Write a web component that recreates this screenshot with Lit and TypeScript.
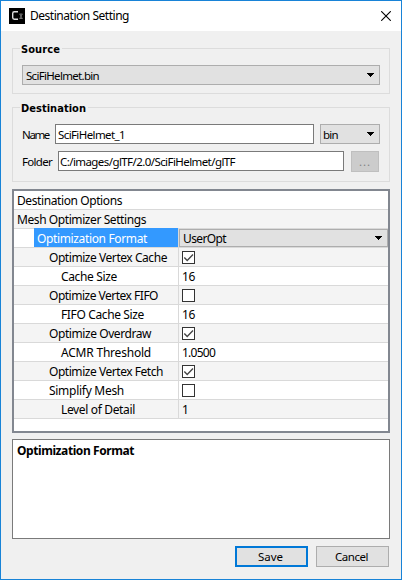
import { LitElement, html, css, svg, nothing } from "lit";
import { customElement, property } from "lit/decorators.js";

/** A label whose tracking is adjusted so that it takes up a given width. */
@customElement("fit-text")
class FitText extends LitElement {
  @property({ type: Number }) w = 0;
  @property() text = "";
  static styles = css`
    :host { display: inline-block; white-space: pre; }
  `;
  render() {
    return html`<span>${this.text}</span>`;
  }
  updated() {
    const span = this.renderRoot.querySelector("span") as HTMLElement;
    span.style.letterSpacing = "0px";
    const natural = span.getBoundingClientRect().width;
    span.style.letterSpacing = `${(this.w - natural) / this.text.length}px`;
  }
}

type Row = {
  label: string;
  w: number;
  level: number;
  value?: string;
  vw?: number;
  check?: boolean;
  select?: boolean;
};

const rows: Row[] = [
  { label: "Destination Options", w: 105, level: 0 },
  { label: "Mesh Optimizer Settings", w: 129, level: 0 },
  { label: "Optimization Format", w: 110, level: 1, value: "UserOpt", vw: 43, select: true },
  { label: "Optimize Vertex Cache", w: 118, level: 2, check: true },
  { label: "Cache Size", w: 56, level: 3, value: "16", vw: 13 },
  { label: "Optimize Vertex FIFO", w: 109, level: 2, check: false },
  { label: "FIFO Cache Size", w: 83, level: 3, value: "16", vw: 13 },
  { label: "Optimize Overdraw", w: 102, level: 2, check: true },
  { label: "ACMR Threshold", w: 90, level: 3, value: "1.0500", vw: 33 },
  { label: "Optimize Vertex Fetch", w: 114, level: 2, check: true },
  { label: "Simplify Mesh", w: 75, level: 2, check: false },
  { label: "Level of Detail", w: 74, level: 3, value: "1", vw: 6 },
];

const arrow = html`<svg class="arrow" width="7" height="4" viewBox="0 0 7 4" shape-rendering="crispEdges">
  <path d="M0 0h7v1h-1v1h-1v1h-1v1h-1v-1h-1v-1h-1v-1h-1z" />
</svg>`;

@customElement("app-root")
class AppRoot extends LitElement {
  static styles = css`
    :host { display: block; }
    * { box-sizing: border-box; }
    .window {
      width: 402px; height: 580px; border: 1px solid #1883d7; background: #f0f0f0; color: #000;
      font: 12px/16px "Noto Sans", "Open Sans", sans-serif; overflow: hidden;
      display: flex; flex-direction: column;
    }
    .tahoma { font-size: 11.5px; }
    .title { height: 30px; flex: none; background: #fff; display: flex; align-items: center; padding: 0 10px 0 8px; }
    .title svg { flex: none; display: block; }
    .title fit-text { margin: 0 auto 0 5px; }
    .body { display: flex; flex-direction: column; padding: 17px 11px 0; }
    .group { border: 1px solid #dcdcdc; padding: 0 9px; }
    .legend {
      display: flex; width: max-content; height: 16px; margin: -8px 0 0 -2px; padding: 0 2px 0 1px;
      background: #f0f0f0; font: bold 11px/17px "DejaVu Sans Condensed", "DejaVu Sans", sans-serif;
      font-stretch: condensed;
    }
    .source { height: 46px; }
    .source .combo { margin-top: 8px; }
    .destination { height: 75px; margin-top: 13px; }
    .line { display: flex; }
    .line.first { margin-top: 8px; }
    .line.second { margin-top: 7px; }
    .line > fit-text { line-height: 22px; height: 20px; flex: none; }
    .first > fit-text { width: 33px; }
    .second > fit-text { width: 36px; }
    .field {
      height: 20px; border: 1px solid #7a7a7a; background: #fff; line-height: 20px; padding-left: 2px; flex: none;
    }
    .name { width: 259px; margin-right: 6px; }
    .folder { width: 286px; margin-right: 7px; padding-left: 1px; }
    .combo {
      height: 20px; border: 1px solid #adadad; background: #e1e1e1; display: flex;
      justify-content: space-between; align-items: flex-start; padding: 0 5px 0 3px; line-height: 20px;
    }
    .combo .arrow { margin-top: 7px; flex: none; }
    .ext { width: 60px; padding-left: 2px; }
    .browse {
      width: 28px; height: 21px; border: 1px solid #bfbfbf; background: #ccc; color: #838383;
      text-align: center; line-height: 19px;
    }
    .table { height: 244px; border: 2px solid #828790; background: #fff; margin-top: 7px; }
    .row { display: flex; height: 19px; border-bottom: 1px solid #d9d9d9; line-height: 20px; }
    .row:nth-child(even) { background: #f4f4f4; }
    .cell { width: 165px; flex: none; border-right: 1px solid #d9d9d9; }
    .wide .cell { width: 100%; border: 0; }
    .l0 { padding-left: 3px; }
    .l1 { padding-left: 23px; }
    .l2 { padding-left: 35px; }
    .l3 { padding-left: 47px; }
    .active .cell { padding-left: 0; display: flex; }
    .mark { background: #3399ff; color: #fff; margin-left: 20px; padding-left: 3px; flex: 1; margin-top: -1px; height: 19px; line-height: 22px; }
    .value { flex: 1; padding-left: 3px; display: flex; min-width: 0; }
    .active .value { padding: 0; }
    .active .combo { flex: 1; height: 18px; line-height: 18px; }
    .active .arrow { margin-top: 6px; }
    .box { width: 13px; height: 13px; margin-top: 3px; display: block; }
    .note { height: 100px; border: 1px solid #7a7a7a; background: #fff; margin-top: 6px; padding: 3px 4px; font-weight: bold; }
    .actions { display: flex; justify-content: flex-end; gap: 8px; margin-top: 7px; padding-right: 1px; }
    .button {
      width: 73px; height: 21px; border: 1px solid #adadad; background: #e1e1e1; text-align: center; line-height: 19px;
      padding-right: 2px;
    }
    .button.primary { border: 2px solid #0078d7; line-height: 17px; }
  `;

  private text(text: string, w: number) {
    return html`<fit-text .text=${text} .w=${w}></fit-text>`;
  }

  private row(r: Row) {
    const wide = r.value === undefined && r.check === undefined;
    const label = this.text(r.label, r.w);
    return html`<div class="row ${wide ? "wide" : ""} ${r.select ? "active" : ""}">
      <div class="cell l${r.level}">${r.select ? html`<div class="mark">${label}</div>` : label}</div>
      ${wide
        ? nothing
        : html`<div class="value">
            ${r.check !== undefined
              ? html`<svg class="box" viewBox="0 0 13 13">
                  <rect x=".5" y=".5" width="12" height="12" fill="#fff" stroke="#333" />
                  ${r.check ? svg`<path d="M2.3 6.5l2.9 2.9 5.8-5.8" fill="none" stroke="#444" stroke-width="1.4" />` : nothing}
                </svg>`
              : r.select
                ? html`<div class="combo">${this.text(r.value!, r.vw!)}${arrow}</div>`
                : this.text(r.value!, r.vw!)}
          </div>`}
    </div>`;
  }

  render() {
    return html`<div class="window">
      <div class="title">
        <svg width="16" height="16" viewBox="0 0 16 16">
          <rect width="16" height="16" fill="#000" />
          <path d="M9 3.7H5.3Q3.7 3.7 3.7 5.4v4.2q0 1.7 1.6 1.7H9" fill="none" stroke="#ddd" stroke-width="1.4" />
          <path d="M10.5 6h3M10.5 10.5h3M10.8 6l2.4 4.5M13.2 6l-2.4 4.5" fill="none" stroke="#999" stroke-width=".7" />
        </svg>
        ${this.text("Destination Setting", 99)}
        <svg width="10" height="10" viewBox="0 0 10 10">
          <path d="M.2.2l9.6 9.6M9.8.2L.2 9.8" stroke="#000" stroke-width="1.1" />
        </svg>
      </div>
      <div class="body">
        <div class="group source">
          <div class="legend">${this.text("Source", 39)}</div>
          <div class="combo tahoma">${this.text("SciFiHelmet.bin", 73)}${arrow}</div>
        </div>
        <div class="group destination">
          <div class="legend">${this.text("Destination", 65)}</div>
          <div class="line first tahoma">
            ${this.text("Name", 27)}
            <div class="field name">${this.text("SciFiHelmet_1", 67)}</div>
            <div class="combo ext">${this.text("bin", 15)}${arrow}</div>
          </div>
          <div class="line second tahoma">
            ${this.text("Folder", 30)}
            <div class="field folder">${this.text("C:/images/glTF/2.0/SciFiHelmet/glTF", 175)}</div>
            <div class="browse">${this.text("...", 12)}</div>
          </div>
        </div>
        <div class="table">${rows.map((r) => this.row(r))}</div>
        <div class="note">${this.text("Optimization Format", 117)}</div>
        <div class="actions tahoma">
          <div class="button primary">${this.text("Save", 25)}</div>
          <div class="button">${this.text("Cancel", 33)}</div>
        </div>
      </div>
    </div>`;
  }
}
